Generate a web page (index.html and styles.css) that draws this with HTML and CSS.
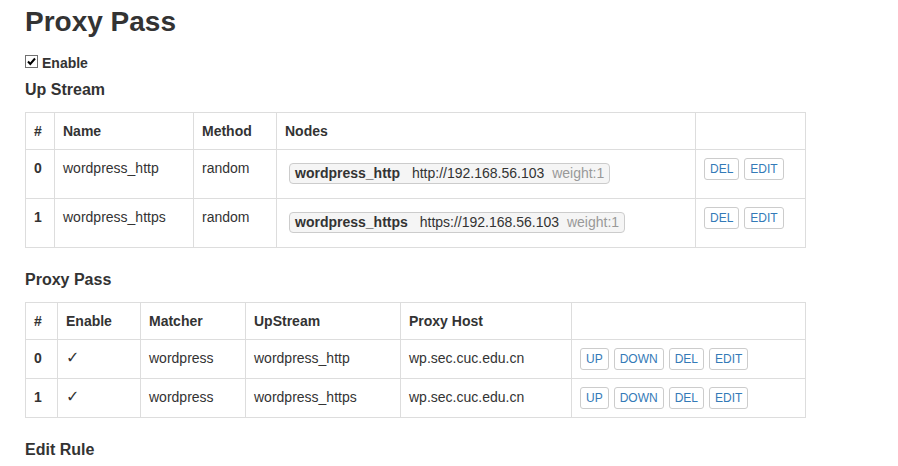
FILE: index.html
```html
<!DOCTYPE html>
<html>
<head>
<meta charset="utf-8">
<link rel="stylesheet" href="styles.css">
</head>
<body>
<div class="page">
  <h1 class="title">Proxy Pass</h1>
  <div class="enable">
    <svg class="cb" width="13" height="13" viewBox="0 0 13 13"><rect x="0.5" y="0.5" width="12" height="12" fill="#fff" stroke="#707070"/><path d="M3 6.5 L5.3 9 L10 3.5" fill="none" stroke="#000" stroke-width="2"/></svg>
    <span>Enable</span>
  </div>

  <h3 class="sub">Up Stream</h3>
  <table class="grid">
    <colgroup>
      <col class="u1"><col class="u2"><col class="u3"><col class="u4"><col class="u5">
    </colgroup>
    <thead>
      <tr><th>#</th><th>Name</th><th>Method</th><th>Nodes</th><th></th></tr>
    </thead>
    <tbody>
      <tr>
        <td class="idx">0</td><td>wordpress_http</td><td>random</td>
        <td><div class="node"><b class="nname">wordpress_http</b> http://192.168.56.103 <span class="weight">weight:1</span></div></td>
        <td><div class="btns"><span class="btn">DEL</span><span class="btn">EDIT</span></div></td>
      </tr>
      <tr>
        <td class="idx">1</td><td>wordpress_https</td><td>random</td>
        <td><div class="node"><b class="nname">wordpress_https</b> https://192.168.56.103 <span class="weight">weight:1</span></div></td>
        <td><div class="btns"><span class="btn">DEL</span><span class="btn">EDIT</span></div></td>
      </tr>
    </tbody>
  </table>

  <h3 class="sub">Proxy Pass</h3>
  <table class="grid">
    <colgroup>
      <col class="p1"><col class="p2"><col class="p3"><col class="p4"><col class="p5"><col class="p6">
    </colgroup>
    <thead>
      <tr><th>#</th><th>Enable</th><th>Matcher</th><th>UpStream</th><th>Proxy Host</th><th></th></tr>
    </thead>
    <tbody>
      <tr>
        <td class="idx">0</td><td class="tick">✓</td><td>wordpress</td><td>wordpress_http</td><td>wp.sec.cuc.edu.cn</td>
        <td><div class="btns"><span class="btn">UP</span><span class="btn">DOWN</span><span class="btn">DEL</span><span class="btn">EDIT</span></div></td>
      </tr>
      <tr>
        <td class="idx">1</td><td class="tick">✓</td><td>wordpress</td><td>wordpress_https</td><td>wp.sec.cuc.edu.cn</td>
        <td><div class="btns"><span class="btn">UP</span><span class="btn">DOWN</span><span class="btn">DEL</span><span class="btn">EDIT</span></div></td>
      </tr>
    </tbody>
  </table>

  <h3 class="sub">Edit Rule</h3>
</div>
</body>
</html>
```
FILE: styles.css
```css
html, body {
  margin: 0;
  padding: 0;
  background: #fff;
}
body {
  font-family: "Liberation Sans", Arial, sans-serif;
  font-size: 14px;
  line-height: 20px;
  color: #333;
}
.page {
  padding: 0 25px;
}
.title {
  font-size: 28px;
  line-height: 34px;
  font-weight: bold;
  margin: 5px 0 14px;
}
.enable {
  display: flex;
  align-items: flex-start;
  font-weight: bold;
  height: 20px;
  margin-bottom: 7px;
}
.cb {
  margin-top: 2px;
  margin-right: 4px;
  flex: none;
}
.sub {
  font-size: 16px;
  line-height: 20px;
  font-weight: bold;
  margin: 0 0 12px;
}
.grid {
  border-collapse: collapse;
  table-layout: fixed;
  width: 780px;
  margin-bottom: 22px;
}
.grid th, .grid td {
  border: 1px solid #ddd;
  padding: 8px;
  text-align: left;
  vertical-align: top;
  white-space: nowrap;
}
.grid th {
  font-weight: bold;
}
.idx {
  font-weight: bold;
}
.u1 { width: 29px; }
.u2 { width: 139px; }
.u3 { width: 83px; }
.u4 { width: 419px; }
.u5 { width: 110px; }
.p1 { width: 32px; }
.p2 { width: 83px; }
.p3 { width: 105px; }
.p4 { width: 155px; }
.p5 { width: 171px; }
.p6 { width: 234px; }
.node {
  width: fit-content;
  margin: 5px 0 6px 4px;
  padding: 0 5px;
  line-height: 19px;
  border: 1px solid #ccc;
  border-radius: 4px;
  background: #f5f5f5;
}
.nname {
  margin-right: 8px;
}
.weight {
  color: #999;
  margin-left: 4px;
}
.btns {
  display: flex;
  gap: 5px;
}
.btn {
  display: block;
  font-size: 12px;
  line-height: 18px;
  padding: 1px 5px;
  border: 1px solid #ccc;
  border-radius: 3px;
  color: #337ab7;
  background: #fff;
}
.tick {
  font-family: "DejaVu Sans", sans-serif;
  font-size: 16px;
}
```
